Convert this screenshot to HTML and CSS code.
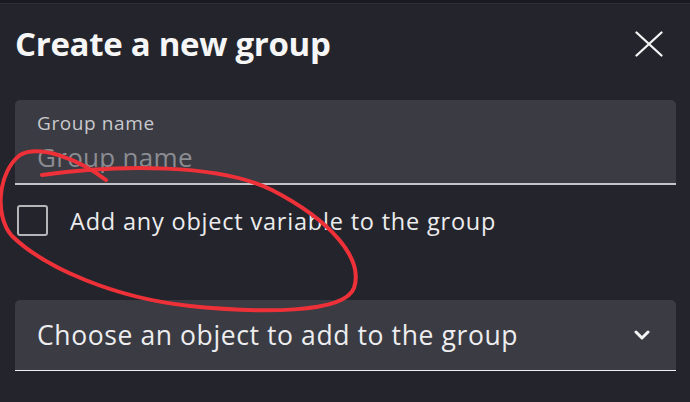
FILE: index.html
```html
<!DOCTYPE html>
<html lang="en">
<head>
<meta charset="utf-8">
<title>Create a new group</title>
<link rel="stylesheet" href="styles.css">
</head>
<body>
<div class="topbar"></div>
<div class="dialog">
  <div class="header">
    <h1 class="title">Create a new group</h1>
    <button class="close" aria-label="Close">
      <svg width="28" height="26" viewBox="0 0 28 26"><path d="M1.5 1.5 L26.5 24.5 M26.5 1.5 L1.5 24.5" stroke="#f4f4f6" stroke-width="2.3" stroke-linecap="round" fill="none"/></svg>
    </button>
  </div>
  <div class="field">
    <label class="field-label">Group name</label>
    <div class="field-placeholder">Group name</div>
  </div>
  <div class="check-row">
    <span class="checkbox"></span>
    <span class="check-label">Add any object variable to the group</span>
  </div>
  <div class="select">
    <span class="select-text">Choose an object to add to the group</span>
    <svg class="chevron" width="16" height="11" viewBox="0 0 16 11"><path d="M2 2 L8 8 L14 2" stroke="#f4f4f6" stroke-width="3" fill="none" stroke-linecap="round" stroke-linejoin="round"/></svg>
  </div>
</div>
<svg class="scribble" width="690" height="402" viewBox="0 0 690 402">
  <path d="M42 175 C 120 164 220 164 272 190 C 330 220 364 258 354 288 C 344 314 260 313 190 306 C 115 298 45 268 12 236 C -6 216 -2 172 20 155 C 40 144 80 160 106 180" stroke="#ee3139" stroke-width="4" fill="none" stroke-linecap="round" stroke-linejoin="round"/>
</svg>
</body>
</html>
```
FILE: styles.css
```css
html, body {
  margin: 0;
  padding: 0;
}
body {
  background: #24252c;
  width: 690px;
  height: 402px;
  overflow: hidden;
  position: relative;
  font-family: "Open Sans", "Noto Sans", sans-serif;
}
.topbar {
  height: 3px;
  background: #1a1b20;
  border-bottom: 1px solid #2e2f36;
}
.dialog {
  padding: 0 14px 0 15px;
}
.header {
  display: flex;
  justify-content: space-between;
  align-items: center;
  height: 80px;
}
.title {
  margin: 0;
  font-size: 33px;
  font-weight: 700;
  color: #f6f6f7;
  letter-spacing: -0.3px;
  line-height: 40px;
}
.close {
  background: none;
  border: none;
  padding: 0;
  margin-right: 13px;
  width: 28px;
  height: 26px;
  display: flex;
}
.field {
  margin-top: 16px;
  height: 85px;
  background: #3a3b43;
  border-radius: 5px 5px 0 0;
  border-bottom: 2px solid #c4c4c8;
  box-sizing: border-box;
  padding: 11px 22px 0;
  display: flex;
  flex-direction: column;
}
.field-label {
  font-size: 19px;
  letter-spacing: 0.6px;
  color: #c9c9cd;
  line-height: 24px;
}
.field-placeholder {
  margin-top: 6px;
  font-size: 26px;
  letter-spacing: 0.3px;
  color: #8b8c92;
  line-height: 32px;
}
.check-row {
  display: flex;
  align-items: center;
  margin-top: 20px;
  height: 31px;
}
.checkbox {
  width: 31px;
  height: 31px;
  box-sizing: border-box;
  border: 2.5px solid #b4b4b9;
  border-radius: 3px;
  margin-left: 2px;
}
.check-label {
  margin-left: 22px;
  font-size: 23.5px;
  letter-spacing: 0.8px;
  color: #ececee;
}
.select {
  margin-top: 64px;
  height: 71px;
  background: #3a3b43;
  border-radius: 5px 5px 0 0;
  border-bottom: 1.5px solid #f0f0f2;
  box-sizing: border-box;
  padding: 0 26px 0 22px;
  display: flex;
  align-items: center;
  justify-content: space-between;
}
.select-text {
  font-size: 26.5px;
  letter-spacing: 0.6px;
  color: #ededef;
}
.scribble {
  position: absolute;
  left: 0;
  top: 0;
  pointer-events: none;
}
```
